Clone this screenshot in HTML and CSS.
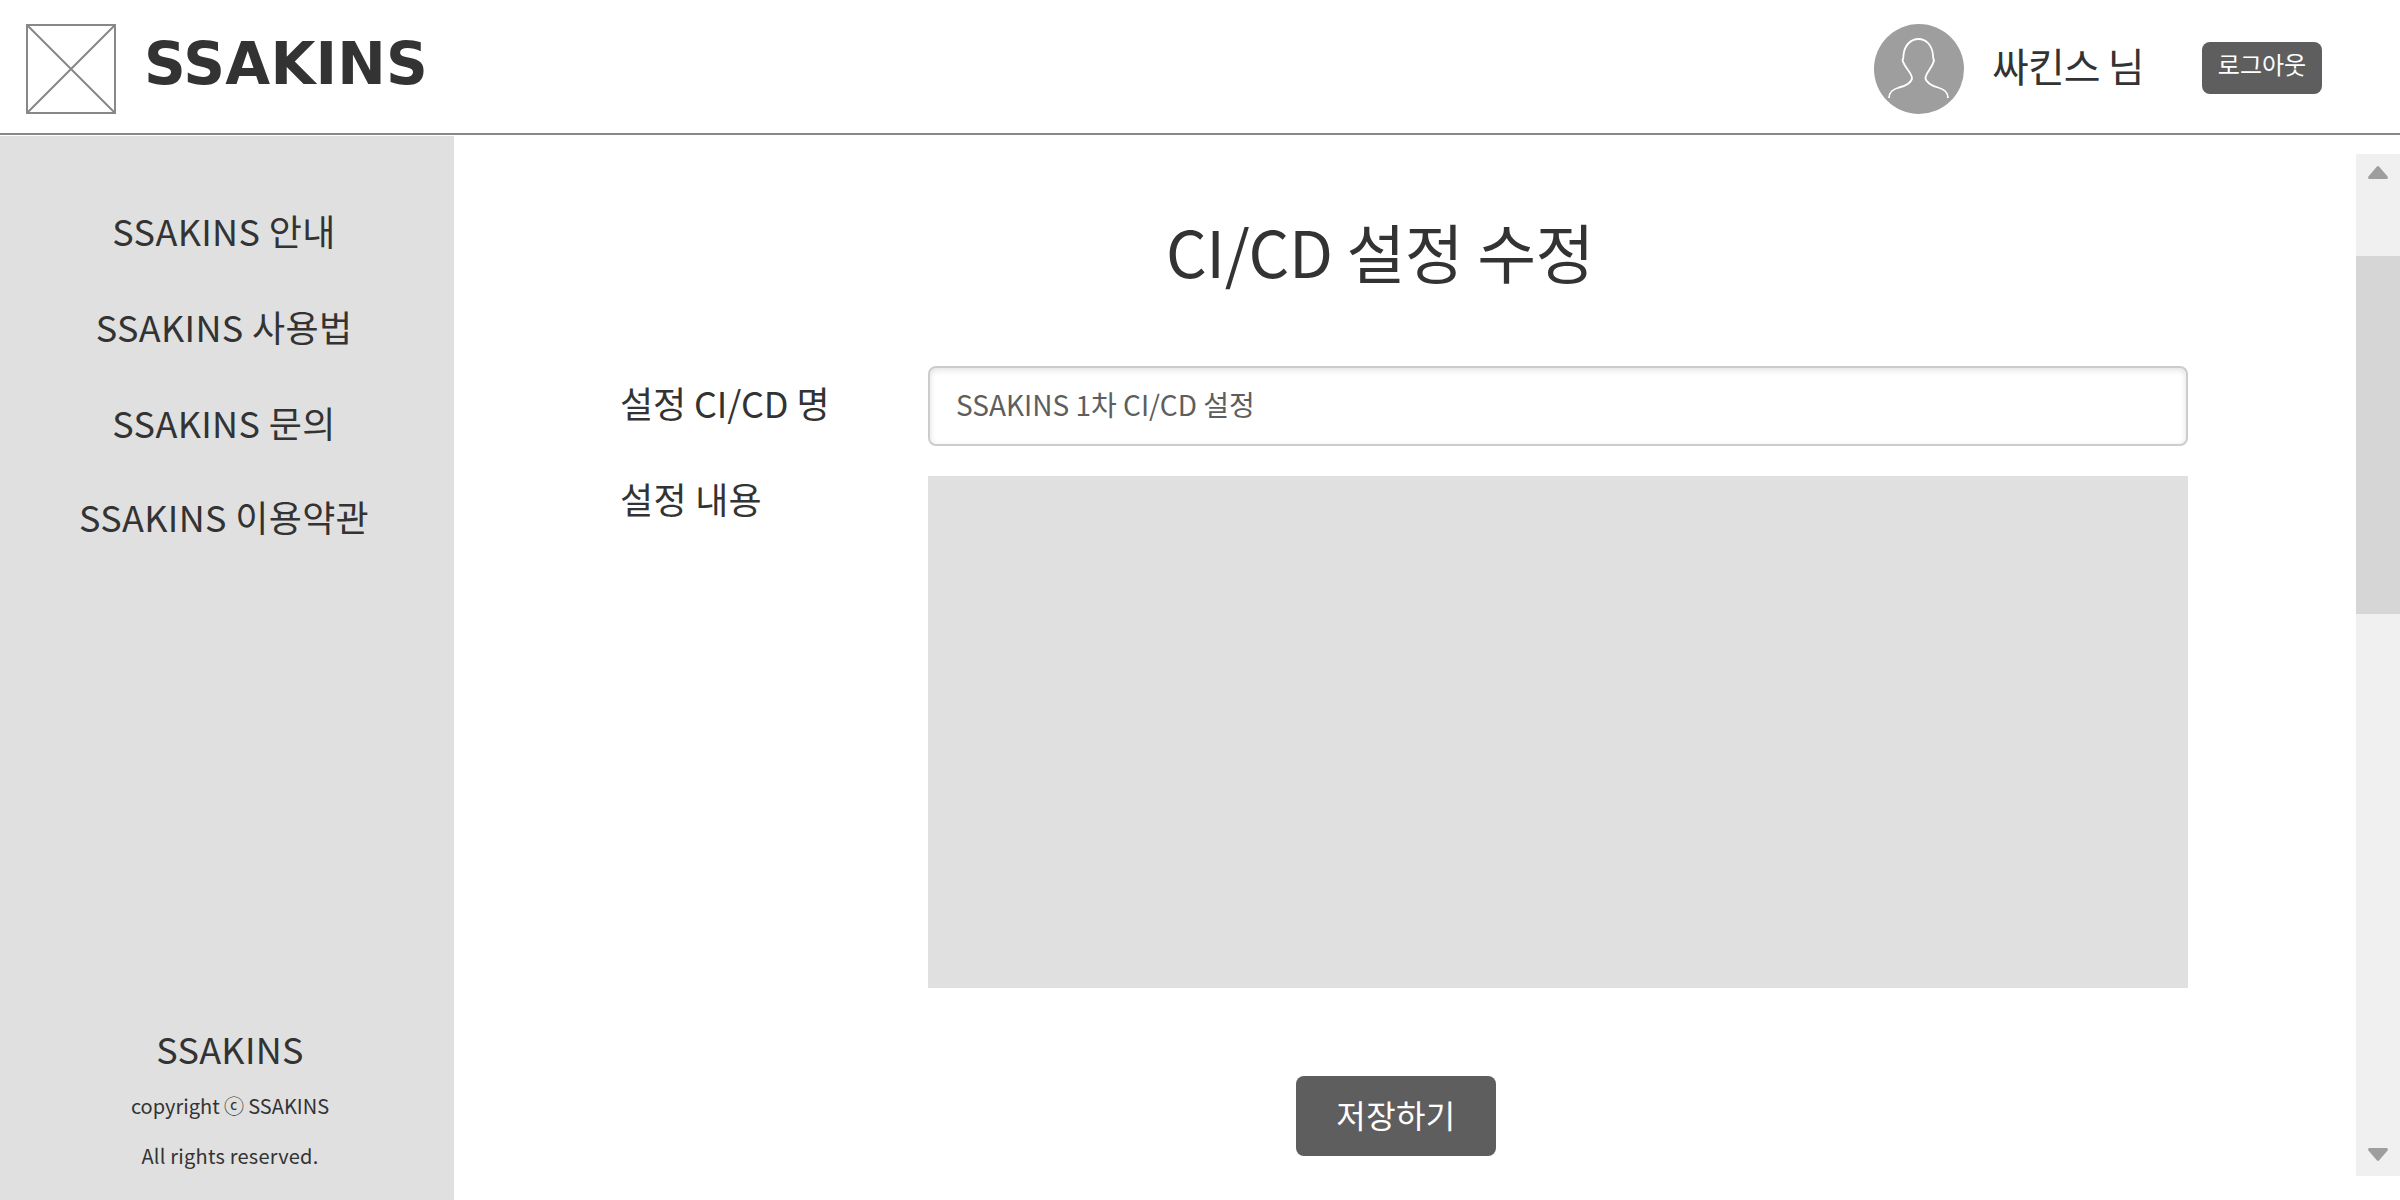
FILE: index.html
```html
<!DOCTYPE html>
<html lang="en">
<head>
<meta charset="utf-8">
<title>SSAKINS</title>
<link rel="stylesheet" href="styles.css">
</head>
<body>
<header class="header">
  <svg class="logo-mark" viewBox="0 0 90 90" fill="none" stroke="#888" stroke-width="2"><rect x="1" y="1" width="88" height="88"/><path d="M1 1 89 89M89 1 1 89"/></svg>
  <h1 class="logo">SSAKINS</h1>
  <div class="user">
    <svg class="avatar" viewBox="0 0 90 90" fill="none"><circle cx="45" cy="45" r="45" fill="#9e9e9e"/><path d="M15 74C15 69 19 65 25 63.500C32 62 38 58 38 54C38 49 30 43 28.500 36C29.500 35 29.500 33 29.500 31C30.500 21 37 15 44.500 15C52 15 58 21 59 31C59 33 59 35 60 36C59 43 51.500 49 51.500 54C51.500 58 58 62 64 63.500C70 65 74 69 74 74" stroke="#fff" stroke-width="1.800"/></svg>
    <span class="user-name">싸킨스 님</span>
    <button class="logout">로그아웃</button>
  </div>
</header>
<div class="layout">
  <aside class="sidebar">
    <nav class="menu">
      <a>SSAKINS 안내</a>
      <a>SSAKINS 사용법</a>
      <a>SSAKINS 문의</a>
      <a>SSAKINS 이용약관</a>
    </nav>
    <footer class="footer">
      <strong>SSAKINS</strong>
      <span class="copyright">copyright ⓒ SSAKINS</span>
      <span class="rights">All rights reserved.</span>
    </footer>
  </aside>
  <main class="content">
    <h2 class="title">CI/CD 설정 수정</h2>
    <form class="form">
      <label class="label" for="name">설정 CI/CD 명</label>
      <input class="input" id="name" type="text" value="SSAKINS 1차 CI/CD 설정">
      <span class="label">설정 내용</span>
      <div class="editor"></div>
    </form>
    <button class="save">저장하기</button>
  </main>
  <div class="scrollbar">
    <svg class="arrow" viewBox="0 0 20 13" fill="#9e9e9e"><path d="M8.800.8Q10-.6 11.200.8L19.600 10.400Q20.500 13 18.500 13H1.500Q-.5 13 .4 10.400Z"/></svg>
    <div class="thumb"></div>
    <svg class="arrow arrow-down" viewBox="0 0 20 13" fill="#9e9e9e"><path d="M8.800 12.200Q10 13.600 11.200 12.200L19.600 2.600Q20.500 0 18.500 0H1.500Q-.5 0 .4 2.600Z"/></svg>
  </div>
</div>
</body>
</html>
```
FILE: styles.css
```css
* { box-sizing: border-box; }
body {
  margin: 0;
  height: 1200px;
  display: flex;
  flex-direction: column;
  overflow: hidden;
  background: #fff;
  color: #333;
  font-family: "Noto Sans CJK JP", "Noto Sans CJK KR", sans-serif;
}
button { border: 0; padding: 0; background: #5e5e5e; color: #fff; border-radius: 8px; font-family: inherit; }
.header {
  display: flex;
  align-items: flex-start;
  height: 135px;
  padding: 24px 78px 0 26px;
  border-bottom: 2px solid #888;
}
.logo-mark { width: 90px; height: 90px; }
.logo {
  margin: 0 0 0 28px;
  font: bold 58px/80px "DejaVu Sans", sans-serif;
  letter-spacing: .2px;
}
.user { display: flex; align-items: flex-start; margin-left: auto; }
.avatar { width: 90px; height: 90px; }
.user-name { width: 210px; margin-left: 28px; font-size: 40px; line-height: 83px; letter-spacing: -.9px; }
.logout { width: 120px; height: 52px; margin-top: 18px; padding-bottom: 8px; font-size: 24px; line-height: 44px; }
.layout { display: flex; height: 1064px; margin-top: 1px; }
.sidebar {
  display: flex;
  flex-direction: column;
  justify-content: space-between;
  width: 454px;
  padding: 68px 0 19px;
  background: #e0e0e0;
  text-align: center;
}
.menu { display: flex; flex-direction: column; gap: 44px; padding-right: 6px; font-size: 36px; line-height: 52px; letter-spacing: .34px; }
.menu a:last-child { margin-top: -2px; }
.footer { display: flex; flex-direction: column; padding-left: 6px; font-size: 20px; line-height: 50px; }
.footer strong { font-size: 36px; font-weight: 400; line-height: 65px; letter-spacing: .3px; }
.copyright { word-spacing: -.2px; }
.rights { letter-spacing: .22px; }
.content { flex: 1; padding: 66px 168px 0 166px; }
.title { margin: 0 48px 68px 0; text-align: center; font-size: 64px; font-weight: 400; line-height: 96px; letter-spacing: -.45px; }
.form { display: grid; grid-template-columns: 308px 1260px; grid-template-rows: 80px 512px; row-gap: 30px; }
.label { font-size: 36px; line-height: 72px; letter-spacing: -.1px; }
.form span.label { line-height: 44px; letter-spacing: .3px; }
.input {
  height: 80px;
  padding: 0 26px 4px;
  border: 2px solid #ccc;
  border-radius: 8px;
  box-shadow: inset 0 2px 6px rgba(0, 0, 0, .12);
  background: #fff;
  color: #5e5e5e;
  font-family: inherit;
  font-size: 28px;
}
.editor { background: #e0e0e0; }
.save { display: block; width: 200px; height: 80px; margin: 88px 0 0 676px; padding: 0 0 3px 0; font-size: 32px; line-height: 77px; letter-spacing: .4px; }
.scrollbar {
  display: flex;
  flex-direction: column;
  align-items: center;
  width: 44px;
  height: 1022px;
  margin-top: 18px;
  padding: 12px 0 15px;
  background: #f0f0f0;
}
.arrow { width: 20px; height: 13px; }
.thumb { width: 44px; height: 358px; margin-top: 77px; background: #d6d6d6; }
.arrow-down { margin-top: auto; }
```
